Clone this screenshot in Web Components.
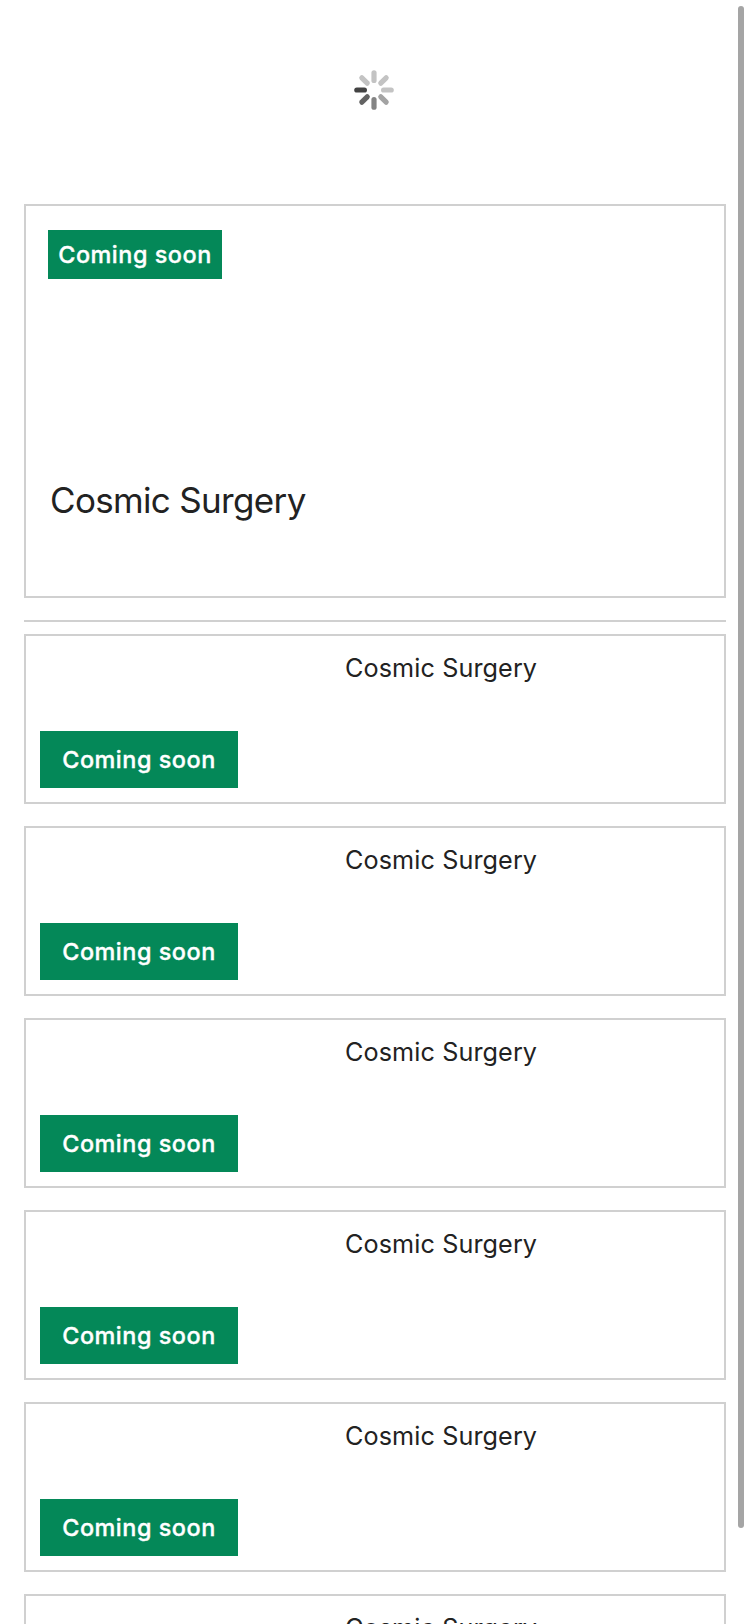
<!DOCTYPE html>
<html lang="en">
<head>
<meta charset="utf-8">
<title>Exhibitions</title>
<style>
html, body { margin: 0; height: 100%; overflow: hidden; background: #fff; }
body { font-family: Inter, "Liberation Sans", sans-serif; color: #222; }
</style>
</head>
<body>
<event-feed></event-feed>
<script>
const define = (name, html) => customElements.define(name, class extends HTMLElement {
  constructor() {
    super();
    const t = document.createElement('template');
    t.innerHTML = html;
    this.attachShadow({ mode: 'open' }).append(t.content.cloneNode(true));
  }
});

define('loading-spinner', `
<style>:host { display: block; width: 40px; height: 40px } svg { display: block } line { stroke-width: 5.2; stroke-linecap: round }</style>
<svg width="40" height="40" viewBox="-20 -20 40 40">
  <line x1="0" y1="-17.2" x2="0" y2="-9.6" stroke="#c3c3c3"/>
  <line x1="0" y1="-17.2" x2="0" y2="-9.6" stroke="#c3c3c3" transform="rotate(45)"/>
  <line x1="0" y1="-17.2" x2="0" y2="-9.6" stroke="#c3c3c3" transform="rotate(90)"/>
  <line x1="0" y1="-17.2" x2="0" y2="-9.6" stroke="#a3a3a3" transform="rotate(135)"/>
  <line x1="0" y1="-17.2" x2="0" y2="-9.6" stroke="#848484" transform="rotate(180)"/>
  <line x1="0" y1="-17.2" x2="0" y2="-9.6" stroke="#636363" transform="rotate(225)"/>
  <line x1="0" y1="-17.2" x2="0" y2="-9.6" stroke="#434343" transform="rotate(270)"/>
  <line x1="0" y1="-17.2" x2="0" y2="-9.6" stroke="#c3c3c3" transform="rotate(315)"/>
</svg>`);

define('status-badge', `
<style>
:host { display: flex; box-sizing: border-box; align-items: center; justify-content: center; width: 198px; height: 57px;
  background: #048858; color: #fff; font-size: 23.4px; font-weight: 500; -webkit-text-stroke: .35px #fff; line-height: 30px; letter-spacing: .54px; white-space: nowrap }
:host([compact]) { width: 174px; height: 49px }
</style><slot></slot>`);

define('feature-card', `
<style>
:host { display: flex; flex-direction: column; justify-content: space-between; box-sizing: border-box; height: 394px;
  border: 2px solid #d0d0d0; padding: 24px 22px 74px; align-items: flex-start }
.title { font-size: 35px; line-height: 44px; letter-spacing: -.67px; padding-left: 2px; white-space: nowrap }
</style>
<slot name="badge"></slot><div class="title"><slot></slot></div>`);

define('event-card', `
<style>
:host { display: grid; grid-template-columns: 305px 1fr; box-sizing: border-box; height: 170px; border: 2px solid #d0d0d0; padding: 14px }
.media { align-self: end }
.title { font-size: 25.2px; line-height: 36px; letter-spacing: .1px; white-space: nowrap }
</style>
<div class="media"><slot name="badge"></slot></div><div class="title"><slot></slot></div>`);

define('scroll-thumb', `<style>:host { position: absolute; top: 6px; right: 6px; width: 6px; height: 1522px; border-radius: 3px; background: #a5a5a5 }</style>`);

define('event-feed', `
<style>
:host { display: block; position: relative; box-sizing: border-box; height: 1624px; overflow: hidden; padding: 0 24px }
header { height: 204px; box-sizing: border-box; padding-top: 70px; display: flex; justify-content: center; padding-right: 2px }
hr { border: 0; height: 2px; margin: 22px 0 12px; background: #d0d0d0 }
.list { display: grid; gap: 22px }
</style>
<header><loading-spinner></loading-spinner></header>
<feature-card><status-badge slot="badge" compact>Coming soon</status-badge>Cosmic Surgery</feature-card>
<hr>
<div class="list">${'<event-card><status-badge slot="badge">Coming soon</status-badge>Cosmic Surgery</event-card>'.repeat(5)}<event-card>Cosmic Surgery</event-card></div>
<scroll-thumb></scroll-thumb>`);
</script>
</body>
</html>
